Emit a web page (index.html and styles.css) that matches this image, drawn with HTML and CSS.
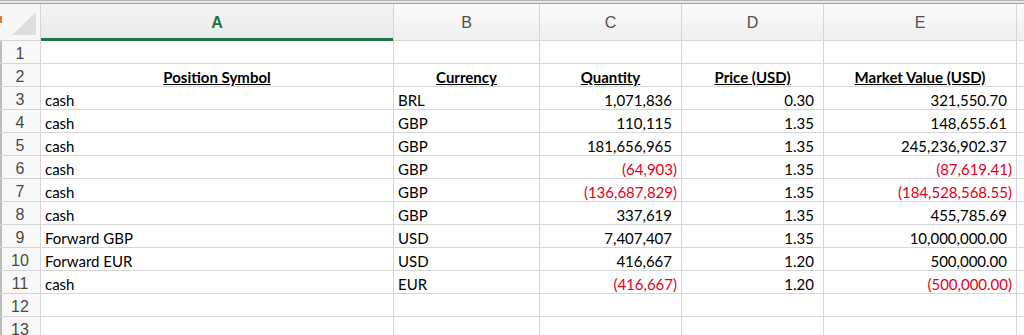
FILE: index.html
```html
<!DOCTYPE html>
<html>
<head>
<meta charset="utf-8">
<link rel="stylesheet" href="styles.css">
</head>
<body>
<div class="topbar"></div>
<div class="sheet">
  <div class="corner"><svg width="40" height="36" viewBox="0 0 40 36"><polygon points="12,31 36,8 36,31" fill="#dedede"/></svg><span class="mark"></span></div>
  <div class="colhead sel">A</div>
  <div class="colhead">B</div>
  <div class="colhead">C</div>
  <div class="colhead">D</div>
  <div class="colhead">E</div>
  <div class="colhead"></div>

  <div class="rowhead">1</div><div class="cell"></div><div class="cell"></div><div class="cell"></div><div class="cell"></div><div class="cell"></div><div class="cell"></div>

  <div class="rowhead">2</div><div class="cell hd">Position Symbol</div><div class="cell hd">Currency</div><div class="cell hd">Quantity</div><div class="cell hd">Price (USD)</div><div class="cell hd">Market Value (USD)</div><div class="cell"></div>

  <div class="rowhead">3</div><div class="cell">cash</div><div class="cell">BRL</div><div class="cell num">1,071,836</div><div class="cell num">0.30</div><div class="cell num">321,550.70</div><div class="cell"></div>
  <div class="rowhead">4</div><div class="cell">cash</div><div class="cell">GBP</div><div class="cell num">110,115</div><div class="cell num">1.35</div><div class="cell num">148,655.61</div><div class="cell"></div>
  <div class="rowhead">5</div><div class="cell">cash</div><div class="cell">GBP</div><div class="cell num">181,656,965</div><div class="cell num">1.35</div><div class="cell num">245,236,902.37</div><div class="cell"></div>
  <div class="rowhead">6</div><div class="cell">cash</div><div class="cell">GBP</div><div class="cell num neg">(64,903)</div><div class="cell num">1.35</div><div class="cell num neg">(87,619.41)</div><div class="cell"></div>
  <div class="rowhead">7</div><div class="cell">cash</div><div class="cell">GBP</div><div class="cell num neg">(136,687,829)</div><div class="cell num">1.35</div><div class="cell num neg">(184,528,568.55)</div><div class="cell"></div>
  <div class="rowhead">8</div><div class="cell">cash</div><div class="cell">GBP</div><div class="cell num">337,619</div><div class="cell num">1.35</div><div class="cell num">455,785.69</div><div class="cell"></div>
  <div class="rowhead">9</div><div class="cell">Forward GBP</div><div class="cell">USD</div><div class="cell num">7,407,407</div><div class="cell num">1.35</div><div class="cell num">10,000,000.00</div><div class="cell"></div>
  <div class="rowhead">10</div><div class="cell">Forward EUR</div><div class="cell">USD</div><div class="cell num">416,667</div><div class="cell num">1.20</div><div class="cell num">500,000.00</div><div class="cell"></div>
  <div class="rowhead">11</div><div class="cell">cash</div><div class="cell">EUR</div><div class="cell num neg">(416,667)</div><div class="cell num">1.20</div><div class="cell num neg">(500,000.00)</div><div class="cell"></div>
  <div class="rowhead">12</div><div class="cell"></div><div class="cell"></div><div class="cell"></div><div class="cell"></div><div class="cell"></div><div class="cell"></div>
  <div class="rowhead">13</div><div class="cell"></div><div class="cell"></div><div class="cell"></div><div class="cell"></div><div class="cell"></div><div class="cell"></div>
</div>
</body>
</html>
```
FILE: styles.css
```css
html, body {
  margin: 0;
  padding: 0;
  background: #ffffff;
  overflow: hidden;
}
body {
  width: 1024px;
  height: 335px;
}
.topbar {
  height: 2px;
  background: #e6e6e6;
  border-top: 1px solid #b4b4b4;
  border-bottom: 1px solid #a4a4a4;
}
.sheet {
  display: grid;
  grid-template-columns: 40px 352px 145px 141px 141px 192px 1fr;
  grid-template-rows: 36px 22px repeat(12, 22px);
  gap: 1px;
  background: #d6d6d6;
  font-family: Lato, "Open Sans", sans-serif;
  font-size: 15px;
  color: #000;
}
.corner {
  position: relative;
  background: #f7f7f7;
}
.corner svg {
  display: block;
}
.mark {
  position: absolute;
  left: 0;
  top: 12px;
  width: 2px;
  height: 7px;
  background: #e07a2e;
}
.colhead {
  position: relative;
  background: linear-gradient(#fbfbfb, #efefef);
  font-family: "Liberation Sans", Arial, sans-serif;
  font-size: 16px;
  color: #505050;
  display: flex;
  align-items: center;
  justify-content: center;
  padding-top: 1px;
  box-sizing: border-box;
}
.colhead.sel {
  background: linear-gradient(#f4f4f4, #e9e9e9);
  color: #217346;
  font-weight: bold;
}
.colhead.sel::after {
  content: "";
  position: absolute;
  left: 0;
  right: 0;
  bottom: -1px;
  height: 3px;
  background: #217346;
}
.rowhead {
  background: #f8f8f8;
  border-left: 2px solid #bdbdbd;
  font-family: "Liberation Sans", Arial, sans-serif;
  font-size: 16px;
  color: #4a4a4a;
  text-align: center;
  line-height: 22px;
  padding-top: 2px;
  box-sizing: border-box;
  padding-right: 2px;
}
.cell {
  background: #ffffff;
  line-height: 22px;
  padding: 2px 4px 0 4px;
  box-sizing: border-box;
  white-space: nowrap;
  overflow: hidden;
}
.hd {
  font-weight: bold;
  text-decoration: underline;
  text-align: center;
}
.num {
  text-align: right;
  padding-right: 9px;
}
.neg {
  color: #e2001a;
  padding-right: 4px;
}
```
